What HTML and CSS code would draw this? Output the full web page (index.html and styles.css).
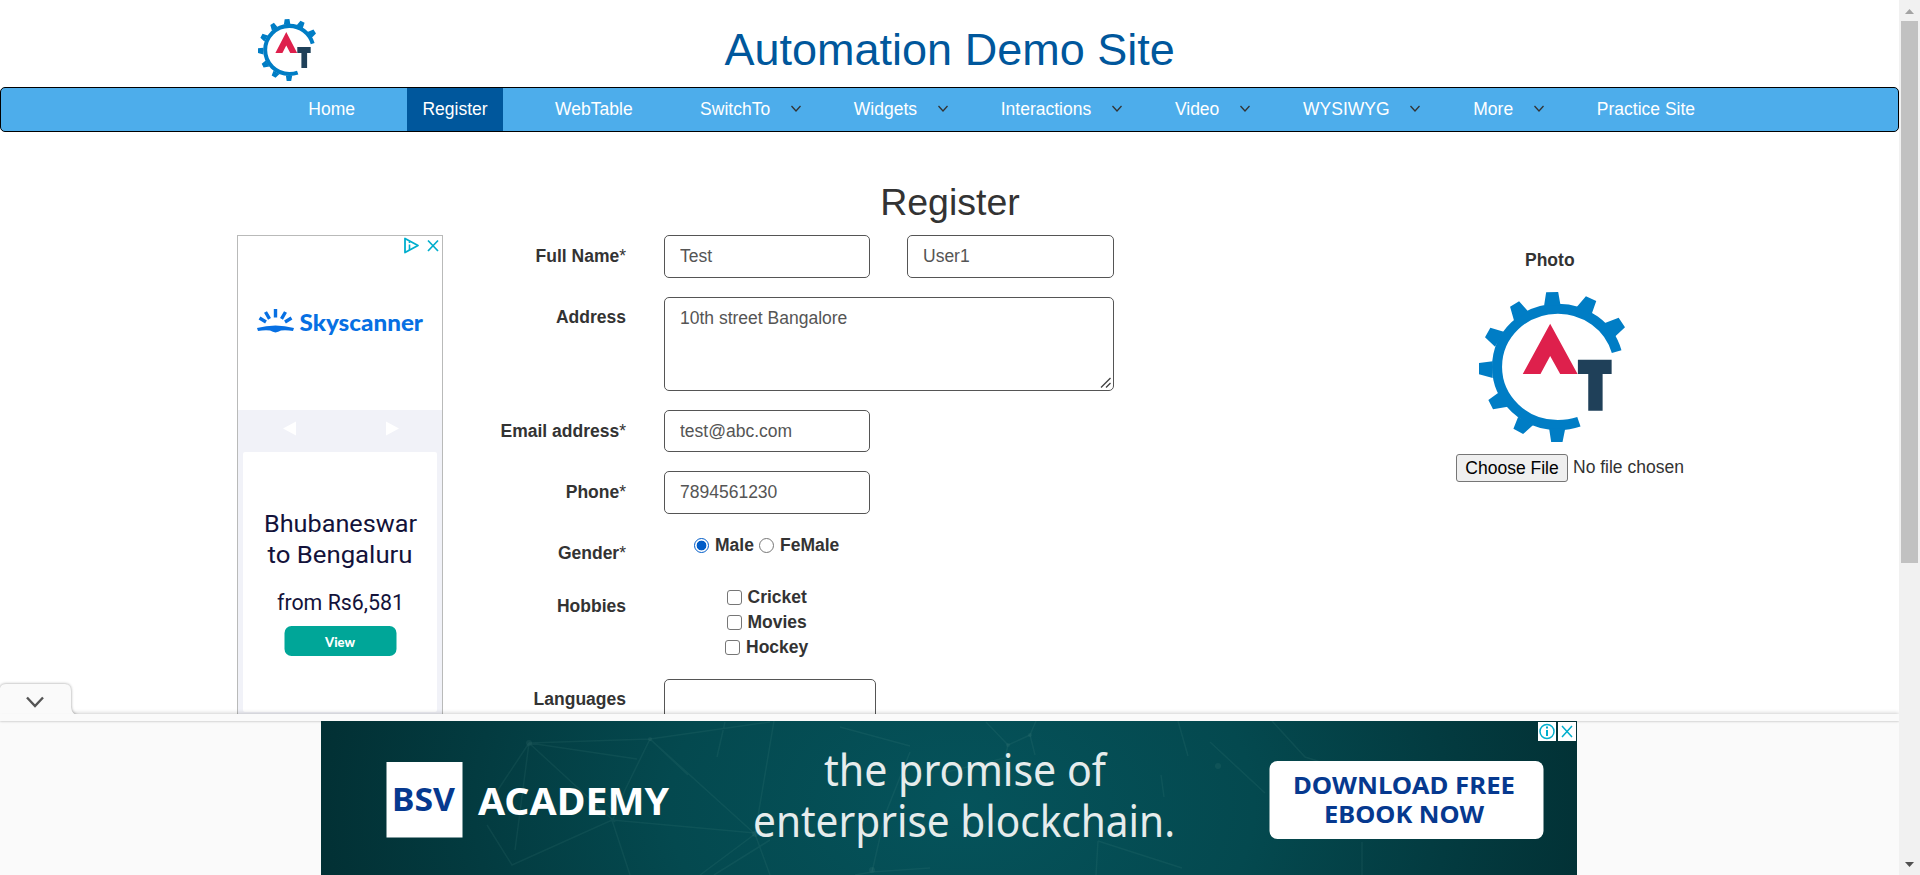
FILE: index.html
```html
<!DOCTYPE html>
<html lang="en">
<head>
<meta charset="utf-8">
<title>Register</title>
<link rel="stylesheet" href="styles.css">
</head>
<body>
<svg width="0" height="0" class="defs">
  <symbol id="logo" viewBox="58 36 437 450" preserveAspectRatio="none">
    <path d="M470 215A182 175 0 0 0 294 86A182 175 0 0 0 112 261A182 175 0 0 0 294 435Q328 435 357 425" fill="none" stroke="#007dc5" stroke-width="30"/>
    <path d="M259 37L295 36L302 76H253ZM378 49L409 63L395 103L348 84ZM476 113L495 142L467 168L450 180L420 140L435 129ZM151 80L178 64L206 95L163 122ZM92 143L132 155L106 200L76 172ZM58 249L99 244V294L58 283ZM86 360L116 338L144 380L100 388ZM175 411L220 435L190 462L161 446ZM268 446H316L308 486H274Z" fill="#007dc5"/>
    <path d="M271 131L353 282H301L271 228L242 282H189Z" fill="#de204c"/>
    <path d="M354 239H455V282H428V392H385V282H354Z" fill="#1f4059"/>
  </symbol>
  <symbol id="down" viewBox="0 0 16 10"><path d="M5.500 2l4.500 5 4.500-5" fill="none" stroke="#333" stroke-width="1.300"/></symbol>
</svg>
<div class="window">
  <div class="page">
    <header class="header">
      <svg class="logo-small"><use href="#logo"/></svg>
      <h1>Automation Demo Site</h1>
    </header>
    <nav class="nav">
      <a>Home</a>
      <a class="active">Register</a>
      <a>WebTable</a>
      <a>SwitchTo</a><svg class="caret"><use href="#down"/></svg>
      <a>Widgets</a><svg class="caret"><use href="#down"/></svg>
      <a>Interactions</a><svg class="caret"><use href="#down"/></svg>
      <a>Video</a><svg class="caret"><use href="#down"/></svg>
      <a>WYSIWYG</a><svg class="caret"><use href="#down"/></svg>
      <a>More</a><svg class="caret"><use href="#down"/></svg>
      <a>Practice Site</a>
    </nav>
    <h2>Register</h2>
    <main class="content">
      <aside class="side-ad">
        <svg width="204" height="479" viewBox="238 236 204 479">
          <path d="M405 238.500V252.500L418 245.500Z" fill="none" stroke="#00aecd" stroke-width="1.800" stroke-linejoin="round"/>
          <path d="M409.500 244.500V250M409.500 241.500v1.500" stroke="#00aecd" stroke-width="1.600"/>
          <path d="M428 240.500l10 10.500M438 240.500l-10 10.500" stroke="#00aecd" stroke-width="1.700"/>
          <g stroke="#0770e3" stroke-width="3.400" fill="none">
            <path d="M275.500 309v8.500M265.500 312l4 6.800M285.500 312l-4 6.800M259.500 318l6.500 4M291.500 318l-6.500 4"/>
          </g>
          <path d="M257 328Q275.500 323 294 328L293 331Q287 330 281 330.500Q278 332 275.500 332.500Q273 332 270 330.500Q264 330 258 331Z" fill="#0770e3"/>
          <text x="299.500" y="331" font-size="23" textLength="123.500" lengthAdjust="spacingAndGlyphs" class="sky">Skyscanner</text>
          <rect x="238" y="410" width="204" height="305" fill="#f1f2f8"/>
          <rect x="243" y="452" width="194" height="260" rx="2" fill="#fff"/>
          <path d="M283 428.500L296 421.500V435.500ZM399 428.500L386 421.500V435.500Z" fill="#fff"/>
          <g class="fare">
            <text x="264" y="531.700" font-size="24" textLength="153" lengthAdjust="spacingAndGlyphs">Bhubaneswar</text>
            <text x="267.500" y="563.300" font-size="24" textLength="145" lengthAdjust="spacingAndGlyphs">to Bengaluru</text>
            <text x="277" y="610" font-size="22.500" textLength="127" lengthAdjust="spacingAndGlyphs">from Rs6,581</text>
          </g>
          <rect x="284.500" y="626" width="112" height="30" rx="7" fill="#00a698"/>
          <text x="325" y="646.500" font-size="14" textLength="30" lengthAdjust="spacingAndGlyphs" class="view">View</text>
        </svg>
      </aside>
      <form class="form">
        <div class="row name-row"><label>Full Name<i>*</i></label><div class="field"><input class="box" value="Test"><input class="box second" value="User1"></div></div>
        <div class="row address-row"><label>Address</label><div class="field"><div class="area-wrap"><textarea class="box area">10th street Bangalore</textarea><svg class="grip" width="12" height="12"><path d="M1 10.500L10.500 1M6 10.500L10.500 6" stroke="#444" stroke-width="1.400"/></svg></div></div></div>
        <div class="row email-row"><label>Email address<i>*</i></label><div class="field"><input class="box" value="test@abc.com"></div></div>
        <div class="row phone-row"><label>Phone<i>*</i></label><div class="field"><input class="box" value="7894561230"></div></div>
        <div class="row gender-row"><label>Gender<i>*</i></label><div class="field gender"><input type="radio" name="g" checked><b class="male">Male</b><input type="radio" name="g"><b>FeMale</b></div></div>
        <div class="row hobby-row"><label>Hobbies</label><div class="field hobbies">
          <div class="hobby"><input type="checkbox"><b>Cricket</b></div>
          <div class="hobby"><input type="checkbox"><b>Movies</b></div>
          <div class="hobby shifted"><input type="checkbox"><b>Hockey</b></div>
        </div></div>
        <div class="row lang-row"><label>Languages</label><div class="field"><input class="box wide"></div></div>
      </form>
      <section class="photo">
        <b>Photo</b>
        <svg class="logo-large"><use href="#logo"/></svg>
        <div class="file"><button type="button">Choose File</button><span>No file chosen</span></div>
      </section>
    </main>
  </div>
  <div class="scrollbar">
    <svg width="21" height="21"><path d="M6 14h9l-4.500-5z" fill="#a3a3a3"/></svg>
    <div class="thumb"></div>
    <svg width="21" height="21"><path d="M6 8h9l-4.500 5z" fill="#505050"/></svg>
  </div>
  <div class="anchor">
    <svg class="anchor-tab" width="84" height="36" viewBox="0 0 84 36">
      <path d="M0 9Q1 5 6 5H65Q71 5 71 12V28Q72 36 79 37H0Z" class="tab-shape"/>
      <path d="M27 18.500l8 8.500 8-8.500" fill="none" stroke="#555" stroke-width="2.400"/>
    </svg>
    <div class="strip"></div>
    <div class="banner">
      <svg width="1256" height="154" viewBox="321 721 1256 154">
        <g stroke="#6fa79c" stroke-opacity=".1" stroke-width="1.500" fill="none">
          <path d="M529 743L650 739L770 722M529 743L637 759M529 743L488 805M529 743L515 850M529 743L615 822M650 739L625 790L612 822M650 739L755 834M650 739L688 775M487 825L512 865L612 820L630 875M612 820L755 833M774 721L755 834L770 875M755 834L700 875M770 840L714 875M725 722L717 757M910 752L885 815L872 872L930 868M872 872L855 875M840 727L910 746"/>
          <path d="M986 722L1008 745L1030 735M1008 745L1005 758L942 773M1035 755L1030 735L1036 721M1178 721L1188 756M1098 841L1182 868M1098 841L1096 875M1272 721L1305 757L1330 765M1210 742L1265 793M1362 842V875M1161 775L1164 797"/>
        </g>
        <g fill="#72a59b" fill-opacity=".1"><circle cx="529" cy="743" r="3"/><circle cx="650" cy="739" r="2"/><circle cx="755" cy="834" r="3"/><circle cx="1008" cy="745" r="2"/><circle cx="1218" cy="766" r="3"/><circle cx="1030" cy="735" r="2"/><circle cx="872" cy="870" r="3"/></g>
        <rect x="386.500" y="762" width="76" height="75.500" fill="#fff"/>
        <g class="brand">
          <text x="392" y="810.500" font-size="31.500" textLength="63" lengthAdjust="spacingAndGlyphs" fill="#06398f">BSV</text>
          <text x="478" y="814.500" font-size="38" textLength="191" lengthAdjust="spacingAndGlyphs" fill="#fff">ACADEMY</text>
        </g>
        <g class="slogan">
          <text x="824" y="785.500" font-size="43" textLength="282" lengthAdjust="spacingAndGlyphs">the promise of</text>
          <text x="753" y="837" font-size="43" textLength="422" lengthAdjust="spacingAndGlyphs">enterprise blockchain.</text>
        </g>
        <rect x="1269.500" y="761" width="274" height="78" rx="8" fill="#fff"/>
        <g class="cta">
          <text x="1293" y="793.500" font-size="24" textLength="222" lengthAdjust="spacingAndGlyphs">DOWNLOAD FREE</text>
          <text x="1324" y="823" font-size="24" textLength="160" lengthAdjust="spacingAndGlyphs">EBOOK NOW</text>
        </g>
        <path d="M1538 722h18v19h-18zM1558 722h18v19h-18z" fill="#fff"/>
        <g fill="none" stroke="#00aecd" stroke-width="1.500"><circle cx="1547" cy="731.500" r="7"/><path d="M1562 726l10 11M1572 726l-10 11"/><path d="M1547 730v6M1547 726.500v2" stroke-width="2"/></g>
      </svg>
    </div>
  </div>
</div>
</body>
</html>
```
FILE: styles.css
```css
* { box-sizing: border-box; }
body { margin: 0; font: 17.5px/25px "Liberation Sans", Arial, sans-serif; color: #333; background: #fff; }
.defs { position: absolute; }
.window { position: relative; display: flex; width: 1920px; height: 875px; overflow: hidden; }
.page { width: 1899px; height: 875px; overflow: hidden; }
.header { display: flex; height: 87px; padding: 19px 0 0 258px; }
.logo-small { width: 58px; height: 62px; }
h1 { margin: 6px 0 0 408.500px; font-size: 45px; line-height: 50px; font-weight: 400; color: #00579c; }
.nav { display: flex; height: 45px; padding-left: 291.7px; border: 1px solid #000; border-radius: 5px; background: #4dadeb; color: #fff; white-space: nowrap; }
.nav a { padding: 0 15.6px; line-height: 43px; }
.nav a + a { margin-left: 36.3px; }
.nav .caret + a { margin-left: 36.5px; }
.nav .active { background: #00579c; }
.caret { width: 16px; height: 10px; margin-top: 16px; }
h2 { margin: 49px 0 0; padding-left: 1px; height: 54px; font-size: 37.5px; line-height: 42px; font-weight: 400; text-align: center; }
.content { display: flex; height: 640px; }
.side-ad { width: 206px; height: 481px; margin-left: 237px; border: 1px solid #b9bab9; background: #fff; }
.side-ad svg { display: block; }
.sky { font-family: Lato, sans-serif; font-weight: 900; fill: #0770e3; }
.fare { font-family: Roboto, sans-serif; fill: #13123a; }
.view { font-family: Lato, sans-serif; font-weight: 900; fill: #fff; }
.form { width: 671px; }
.row { display: flex; }
.row label { width: 183px; padding-top: 9px; text-align: right; font-weight: 700; }
.row label i { font-style: normal; font-weight: 400; }
.field { display: flex; margin-left: 38px; }
.box { width: 206px; height: 43px; padding: 0 15px; border: 1px solid #555; border-radius: 5px; background: #fff; color: #555; font: inherit; outline: 0; }
.second { width: 207px; margin-left: 37px; }
.name-row { height: 62px; }
.address-row { height: 113px; }
.address-row label { padding-top: 8px; }
.area-wrap { position: relative; width: 450px; height: 94px; }
.area { display: block; width: 450px; height: 94px; padding: 8px 15px; resize: none; overflow: hidden; }
.grip { position: absolute; right: 2px; bottom: 2px; }
.email-row { height: 61px; }
.email-row .box { height: 42px; }
.phone-row { height: 62px; }
.gender-row { height: 52px; }
.gender-row label { padding-top: 8px; }
.gender { padding-left: 30px; align-items: flex-start; }
.male { width: 44px; }
input[type="radio"], input[type="checkbox"] { appearance: none; flex: none; width: 15px; height: 15px; margin: 0 6px 0 0; border: 1px solid #767676; background: #fff; }
input[type="radio"] { margin-top: 5px; border-radius: 50%; }
input[type="radio"]:checked { border: 1.5px solid #005cc8; background: radial-gradient(circle, #005cc8 4.6px, #fff 5.2px); }
input[type="checkbox"] { border-radius: 3px; margin-top: 5px; }
.hobby-row { height: 94px; }
.hobby-row label { padding-top: 9px; }
.hobbies { flex-direction: column; padding-left: 62.5px; }
.hobby { display: flex; height: 25px; }
.shifted { margin-left: -1.5px; }
.lang-row label { padding-top: 8px; }
.wide { width: 212px; }
.photo { display: flex; flex-direction: column; margin-left: 342px; padding-top: 13px; }
.photo b { padding-left: 69px; line-height: 24px; }
.logo-large { width: 146px; height: 150px; margin: 20px 0 12px 23px; }
.file { display: flex; line-height: 27px; }
.file button { width: 112px; height: 28px; padding: 0; margin-right: 5px; border: 1px solid #767676; border-radius: 3px; background: #efefef; color: #000; font: inherit; line-height: 25px; }
.scrollbar { display: flex; flex-direction: column; width: 21px; height: 875px; background: #f1f1f1; }
.scrollbar svg { flex: none; }
.thumb { width: 17px; height: 542px; margin: 0 2px auto; background: #c1c1c1; }
.anchor { position: absolute; left: 0; bottom: 0; width: 1899px; height: 161px; background: #fafafa; box-shadow: 0 -1px 4px rgba(0,0,0,.18); clip-path: inset(-40px 0 0 0); }
.anchor-tab { position: absolute; left: 0; top: -35px; }
.tab-shape { fill: #fafafa; filter: drop-shadow(0 0 1.5px rgba(0,0,0,.4)); }
.strip { position: relative; height: 7px; background: #fafafa; box-shadow: 0 1px 2px rgba(0,0,0,.15); }
.banner { position: relative; width: 1256px; height: 154px; margin-left: 321px; background: radial-gradient(ellipse 650px 430px at 51% 55%, #05535b 0%, #04494f 45%, #033b40 75%, #023034 100%); }
.banner svg { display: block; }
.brand { font-family: "Noto Sans", sans-serif; font-weight: 700; }
.slogan { font-family: "Noto Sans", sans-serif; font-weight: 400; fill: #e6ecec; }
.cta { font-family: "Noto Sans", sans-serif; font-weight: 700; fill: #06398f; }
```
